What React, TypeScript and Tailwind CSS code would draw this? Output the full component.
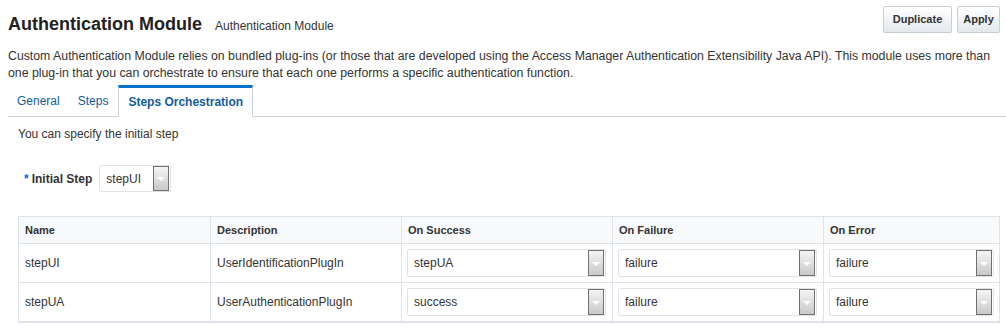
import React from "react";

function Arrow({ h }: { h: string }) {
  return (
    <div
      className={`flex ${h} w-[16px] shrink-0 items-center justify-center border border-[#707070] bg-gradient-to-b from-[#f4f4f4] to-[#c9c9c9]`}
    >
      <svg width="8" height="5" viewBox="0 0 8 5" className="mt-[2px]">
        <polygon points="0,0 8,0 4,4" fill="#ffffff" />
      </svg>
    </div>
  );
}

function Select({ value, w }: { value: string; w: string }) {
  return (
    <div
      className={`flex h-[28px] ${w} items-center justify-between rounded-[2px] border border-[#dde3e8] bg-white pl-[6px] pr-[1px]`}
    >
      <span className="text-[12px] text-[#333]">{value}</span>
      <Arrow h="h-[26px]" />
    </div>
  );
}

const rows = [
  { name: "stepUI", desc: "UserIdentificationPlugIn", s: "stepUA", f: "failure", e: "failure" },
  { name: "stepUA", desc: "UserAuthenticationPlugIn", s: "success", f: "failure", e: "failure" },
];

export default function App() {
  return (
    <div
      className="h-[329px] w-[1006px] overflow-hidden bg-white text-[#333]"
      style={{ fontFamily: '"Liberation Sans", Arial, sans-serif' }}
    >
      {/* header */}
      <div className="flex items-start justify-between pl-[8px] pr-[6px] pt-[6px]">
        <div className="flex items-baseline pt-[6px]">
          <span className="text-[18px] font-bold leading-[24px] text-[#222]">Authentication Module</span>
          <span className="ml-[13px] text-[12px] text-[#333]">Authentication Module</span>
        </div>
        <div className="flex gap-[5px]">
          <button className="h-[27px] w-[69px] rounded-[2px] border border-[#c4ced7] bg-gradient-to-b from-[#ffffff] to-[#e3e8ed] text-[11px] font-bold text-[#333]">
            Duplicate
          </button>
          <button className="h-[27px] w-[43px] rounded-[2px] border border-[#c4ced7] bg-gradient-to-b from-[#ffffff] to-[#e3e8ed] text-[11px] font-bold text-[#333]">
            Apply
          </button>
        </div>
      </div>

      {/* description */}
      <div className="mt-[12px] pl-[8px] text-[12.3px] leading-[17px] text-[#333]">
        Custom Authentication Module relies on bundled plug-ins (or those that are developed using the Access Manager
        Authentication Extensibility Java API). This module uses more than
        <br />
        one plug-in that you can orchestrate to ensure that each one performs a specific authentication function.
      </div>

      {/* tabs */}
      <div className="ml-[8px] mt-[3px] flex h-[32px] items-stretch border-b border-[#c9d4dd]">
        <div className="flex items-center px-[9px] text-[12px] text-[#145c9e]">General</div>
        <div className="flex items-center pl-[9px] pr-[10px] text-[12px] text-[#145c9e]">Steps</div>
        <div className="-mb-px flex items-center border-x border-t-[3px] border-x-[#c9d4dd] border-t-[#0572ce] bg-white px-[9px] pb-[2px] text-[12px] font-bold text-[#145c9e]">
          Steps Orchestration
        </div>
      </div>

      {/* content */}
      <div className="pl-[18px]">
        <div className="mt-[10px] text-[12px] leading-[15px]">You can specify the initial step</div>
        <div className="mt-[23px] flex items-center pl-[6px]">
          <span className="mr-[3px] text-[12px] font-bold text-[#0572ce]">*</span>
          <span className="text-[12px] font-bold text-[#333]">Initial Step</span>
          <div className="ml-[7px] flex h-[27px] w-[72px] items-center justify-between rounded-[2px] border border-[#dde3e8] bg-white pl-[6px] pr-[1px]">
            <span className="text-[12px]">stepUI</span>
            <Arrow h="h-[25px]" />
          </div>
        </div>

        {/* table */}
        <div className="mt-[24px] w-[982px] border border-b-2 border-[#dde3e8]">
          <div className="grid h-[27px] grid-cols-[191px_191px_211px_211px_176px] border-b border-[#dde3e8] bg-[#f7f9fa] text-[11px] font-bold text-[#333]">
            {["Name", "Description", "On Success", "On Failure", "On Error"].map((h, i) => (
              <div key={h} className={`flex items-center pl-[6px] ${i > 0 ? "border-l border-[#dde3e8]" : ""}`}>
                {h}
              </div>
            ))}
          </div>
          {rows.map((r, idx) => (
            <div
              key={r.name}
              className={`grid grid-cols-[191px_191px_211px_211px_176px] text-[12px] ${
                idx === 0 ? "h-[39px] border-b border-[#dde3e8]" : "h-[38px]"
              }`}
            >
              <div className="flex items-center pl-[6px]">{r.name}</div>
              <div className="flex items-center border-l border-[#dde3e8] pl-[6px]">{r.desc}</div>
              <div className="flex items-center border-l border-[#dde3e8] pl-[5px]">
                <Select value={r.s} w="w-[199px]" />
              </div>
              <div className="flex items-center border-l border-[#dde3e8] pl-[5px]">
                <Select value={r.f} w="w-[199px]" />
              </div>
              <div className="flex items-center border-l border-[#dde3e8] pl-[5px]">
                <Select value={r.e} w="w-[165px]" />
              </div>
            </div>
          ))}
        </div>
      </div>
    </div>
  );
}
